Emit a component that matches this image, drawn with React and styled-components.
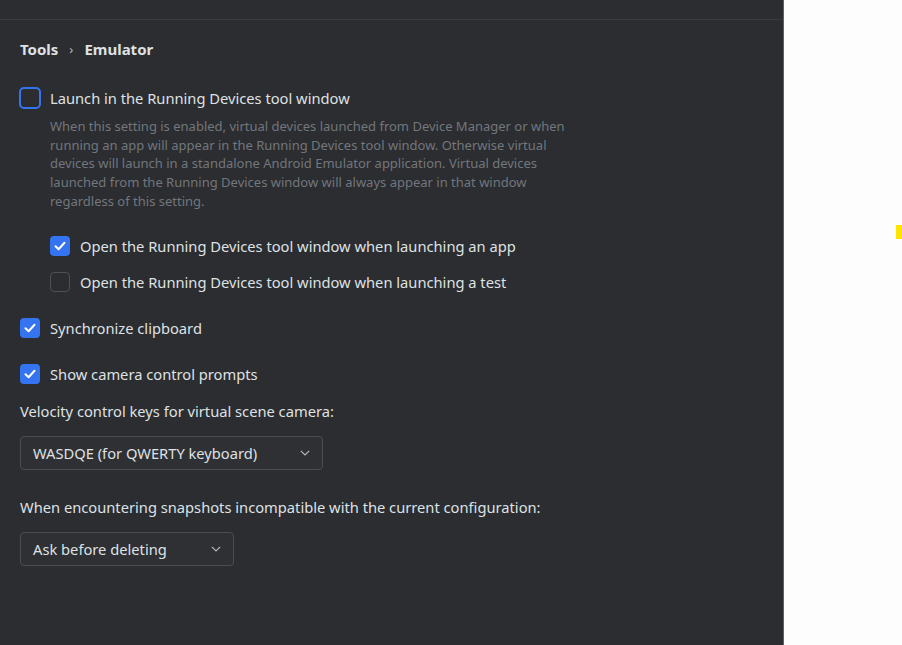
import React from "react";
import styled, { createGlobalStyle } from "styled-components";

const Global = createGlobalStyle`
  html, body { margin: 0; padding: 0; background: #fdfdfd; }
  body { font-family: "Noto Sans", "Open Sans", sans-serif; }
`;

const Screen = styled.div`
  display: flex;
  height: 645px;
  width: 902px;
  overflow: hidden;
`;

const Panel = styled.div`
  width: 783px;
  flex: none;
  background: #2b2d30;
  border-right: 1px solid #5d6066;
  display: flex;
  flex-direction: column;
  color: #dfe1e5;
`;

const TopStrip = styled.div`
  height: 19px;
  border-bottom: 1px solid #393b40;
`;

const Content = styled.div`
  padding: 19px 20px 0 20px;
  display: flex;
  flex-direction: column;
`;

const Breadcrumb = styled.div`
  display: flex;
  align-items: center;
  gap: 11px;
  height: 20px;
  font-size: 15px;
  font-weight: 700;
  color: #dfe1e5;
`;

const Sep = styled.span`
  font-weight: 400;
  font-size: 13px;
  color: #b4b8bf;
`;

const Row = styled.label`
  display: flex;
  align-items: center;
  gap: 10px;
  height: ${(p) => p.$h || 20}px;
  margin-top: ${(p) => p.$mt || 0}px;
  margin-left: ${(p) => p.$indent || 0}px;
  font-size: 14.7px;
  color: #dfe1e5;
  white-space: nowrap;
`;

const Box = styled.span`
  box-sizing: border-box;
  width: ${(p) => (p.$focused ? 22 : 20)}px;
  height: ${(p) => (p.$focused ? 22 : 20)}px;
  margin-left: ${(p) => (p.$focused ? -1 : 0)}px;
  margin-right: ${(p) => (p.$focused ? -1 : 0)}px;
  border-radius: ${(p) => (p.$focused ? 5 : 4)}px;
  flex: none;
  display: flex;
  align-items: center;
  justify-content: center;
  background: ${(p) => (p.$checked ? "#3574f0" : "transparent")};
  border: ${(p) =>
    p.$checked
      ? "none"
      : p.$focused
      ? "2.5px solid #3574f0"
      : "1px solid #4e5157"};
`;

const Description = styled.p`
  margin: 8px 0 0 30px;
  width: 530px;
  font-size: 13px;
  line-height: 18.7px;
  color: #72767d;
`;

const Label = styled.div`
  font-size: 14.7px;
  height: 20px;
  line-height: 20px;
  margin-top: ${(p) => p.$mt || 0}px;
  color: #dfe1e5;
  white-space: nowrap;
`;

const Select = styled.div`
  box-sizing: border-box;
  width: ${(p) => p.$w}px;
  height: 34px;
  margin-top: 15px;
  padding: 1px 12px 0 12px;
  display: flex;
  align-items: center;
  justify-content: space-between;
  border: 1px solid #4a4d52;
  border-radius: 4px;
  background: #2e3033;
  font-size: 14.7px;
  color: #dfe1e5;
  white-space: nowrap;
`;

const Side = styled.div`
  flex: 1;
  background: #fdfdfd;
  display: flex;
  flex-direction: column;
  align-items: flex-end;
  padding-top: 225px;
`;

const Marker = styled.div`
  width: 6px;
  height: 14px;
  background: #ffe500;
`;

const Check = () => (
  <svg width="14" height="14" viewBox="0 0 14 14">
    <path
      d="M2.5 7.2 L5.6 10.2 L11.5 3.8"
      fill="none"
      stroke="#ffffff"
      strokeWidth="2"
      strokeLinecap="round"
      strokeLinejoin="round"
    />
  </svg>
);

const Checkbox = ({ checked, focused }) => (
  <Box $checked={checked} $focused={focused}>
    {checked && <Check />}
  </Box>
);

const Chevron = () => (
  <svg width="10" height="6" viewBox="0 0 10 6">
    <path d="M0.8 0.8 L5 5 L9.2 0.8" fill="none" stroke="#b4b8bf" strokeWidth="1.2" />
  </svg>
);

export default function App() {
  return (
    <>
      <Global />
      <Screen>
        <Panel>
          <TopStrip />
          <Content>
            <Breadcrumb>
              <span>Tools</span>
              <Sep>›</Sep>
              <span>Emulator</span>
            </Breadcrumb>

            <Row $h={22} $mt={28}>
              <Checkbox focused />
              Launch in the Running Devices tool window
            </Row>
            <Description>
              When this setting is enabled, virtual devices launched from Device Manager or when
              running an app will appear in the Running Devices tool window. Otherwise virtual
              devices will launch in a standalone Android Emulator application. Virtual devices
              launched from the Running Devices window will always appear in that window
              regardless of this setting.
            </Description>

            <Row $indent={30} $mt={25}>
              <Checkbox checked />
              Open the Running Devices tool window when launching an app
            </Row>
            <Row $indent={30} $mt={16}>
              <Checkbox />
              Open the Running Devices tool window when launching a test
            </Row>

            <Row $mt={26}>
              <Checkbox checked />
              Synchronize clipboard
            </Row>
            <Row $mt={26}>
              <Checkbox checked />
              Show camera control prompts
            </Row>

            <Label $mt={17}>Velocity control keys for virtual scene camera:</Label>
            <Select $w={303}>
              <span>WASDQE (for QWERTY keyboard)</span>
              <Chevron />
            </Select>

            <Label $mt={27}>When encountering snapshots incompatible with the current configuration:</Label>
            <Select $w={214}>
              <span>Ask before deleting</span>
              <Chevron />
            </Select>
          </Content>
        </Panel>
        <Side>
          <Marker />
        </Side>
      </Screen>
    </>
  );
}
